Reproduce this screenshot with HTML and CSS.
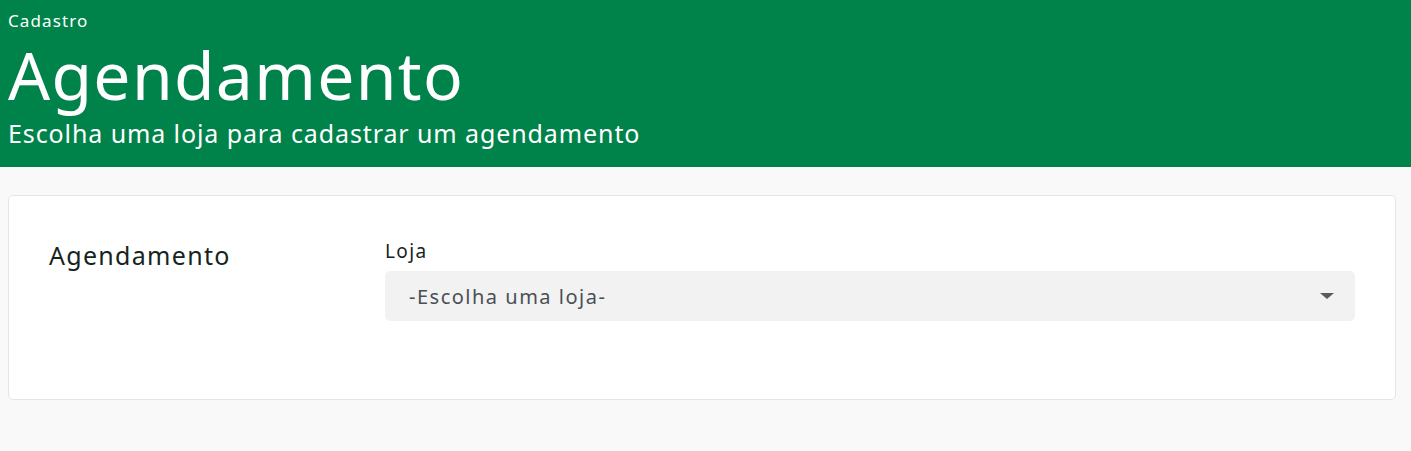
FILE: index.html
```html
<!DOCTYPE html>
<html lang="pt-BR">
<head>
<meta charset="utf-8">
<title>Agendamento</title>
<link rel="stylesheet" href="styles.css">
</head>
<body>
<header class="hero">
  <div class="crumb">Cadastro</div>
  <h1 class="title">Agendamento</h1>
  <p class="subtitle">Escolha uma loja para cadastrar um agendamento</p>
</header>
<main class="content">
  <section class="card">
    <h2 class="section-title">Agendamento</h2>
    <div class="field">
      <label class="label" for="loja">Loja</label>
      <div class="select" id="loja">
        <span class="select-text">-Escolha uma loja-</span>
        <span class="caret"></span>
      </div>
    </div>
  </section>
</main>
</body>
</html>
```
FILE: styles.css
```css
* { box-sizing: border-box; }
html, body { margin: 0; padding: 0; }
body {
  background: #f9f9f9;
  font-family: "Noto Sans", "Open Sans", sans-serif;
  color: #1d2a22;
}
.hero {
  background: #00834a;
  color: #ffffff;
  height: 167px;
  padding: 9px 8px 0;
}
.crumb { font-size: 17px; line-height: 24px; letter-spacing: 1.1px; }
.title {
  margin: 0;
  font-weight: 400;
  font-size: 66px;
  line-height: 83px;
  letter-spacing: 1.3px;
}
.subtitle { margin: 0; font-size: 25px; line-height: 35px; letter-spacing: 0.9px; }
.content { padding: 28px 15px 0 8px; }
.card {
  background: #fff;
  border: 1px solid #e5e5e5;
  border-radius: 5px;
  padding: 40px 40px 78px 40px;
  display: grid;
  grid-template-columns: 336px 1fr;
  align-items: start;
}
.section-title {
  margin: 0;
  font-size: 25px;
  font-weight: 400;
  line-height: 39px;
  letter-spacing: 1.3px;
  color: #17241c;
}
.label {
  display: block;
  font-size: 19px;
  line-height: 31px;
  letter-spacing: 1.4px;
  color: #17241c;
}
.select {
  margin-top: 4px;
  height: 50px;
  background: #f2f2f2;
  border-radius: 5px;
  display: flex;
  align-items: center;
  justify-content: space-between;
  padding: 0 21px 0 24px;
}
.select-text { font-size: 20px; letter-spacing: 1.5px; color: #4a4f55; }
.caret {
  width: 0; height: 0;
  border-left: 7px solid transparent;
  border-right: 7px solid transparent;
  border-top: 6px solid #5b5b5b;
}
```
